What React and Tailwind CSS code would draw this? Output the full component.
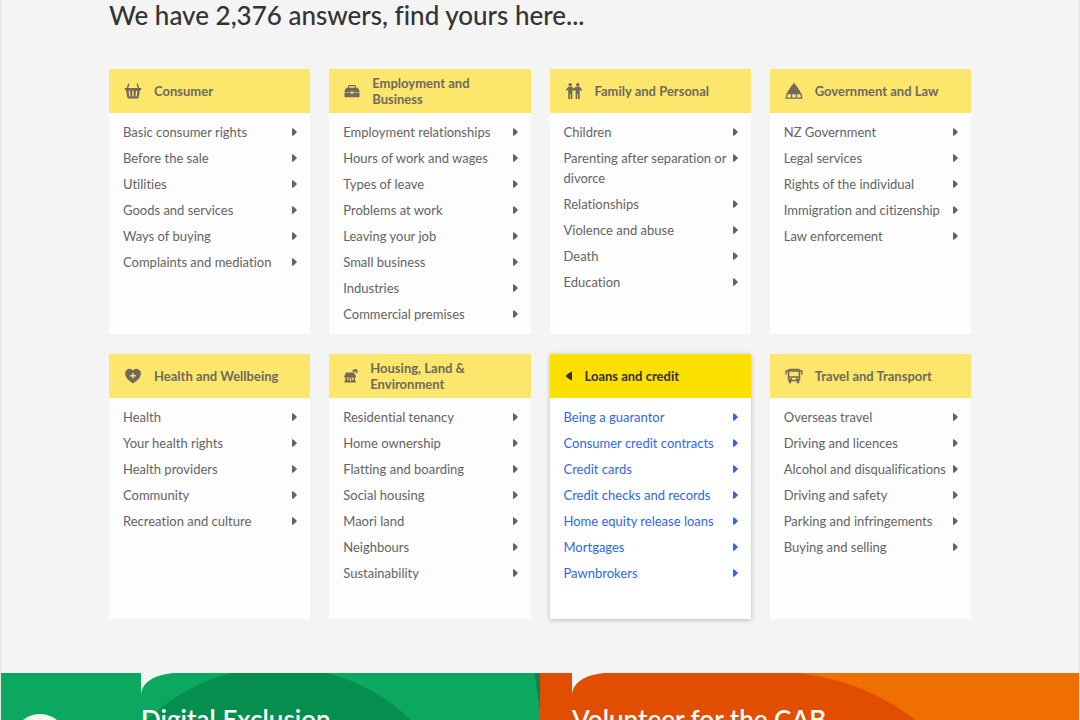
import React from "react";

const Basket = () => (
  <svg width="18" height="18" viewBox="0 0 18 18" fill="currentColor" fillRule="evenodd" aria-hidden="true">
    <path d="M4.200 1.600 5.500 2.100 4.200 6.200H2.700zM13.800 1.600 12.500 2.100 13.800 6.200H15.300z" />
    <path d="M.8 6h16.400v1.900H16L14.700 15.300q-.2 1.200-1.300 1.200H4.600q-1.100 0-1.300-1.200L2 7.900H.8zM4.600 8.800l.7 5.700h1.200L6 8.800zM8.300 8.800v5.700h1.400V8.800zM12 8.800l-.5 5.700h1.200l.7-5.700z" />
  </svg>
);

const Briefcase = () => (
  <svg width="16" height="18" viewBox="0 0 16 18" fill="currentColor" aria-hidden="true">
    <path d="M4.600 6.500V4.600q0-.9.900-.9h5q.9 0 .9.900v1.900" fill="none" stroke="currentColor" strokeWidth="1.200" />
    <path d="M2.200 5.800h11.600l1.700 3v1.600H9.200v-.8H6.800v.8H.5V8.800z" />
    <path d="M.5 11h6.300v.8h2.400V11h6.300v3.400q0 .8-.8.800H1.300q-.8 0-.8-.8z" />
  </svg>
);

const People = () => (
  <svg width="18" height="18" viewBox="0 0 18 18" fill="currentColor" aria-hidden="true">
    <circle cx="5.200" cy="2.700" r="1.700" />
    <circle cx="12.800" cy="2.700" r="1.700" />
    <path d="M3.200 4.800h4L9 6.600l1.800-1.800h4l2.400 3.100-.9 1.100-1.500-1.500V17h-1.700v-5h-.8v5h-1.700V7.900L9 9 7.400 7.900V17H5.700v-5h-.8v5H3.200V7.500L1.700 9 .8 7.900z" />
  </svg>
);

const Beehive = () => (
  <svg width="18" height="18" viewBox="0 0 18 18" fill="currentColor" aria-hidden="true">
    <path d="M8.400.8h1.200v1.400l1.900 1 .3 1.700 1.500.9.400 1.900 1.400 1 .5 2.600H2.400l.5-2.600 1.400-1 .4-1.900 1.500-.9.300-1.700 1.900-1z" />
    <path d="M2.200 11.600h13.600l1 4.600H1.200zM6.600 11.600v4.600M11.400 11.600v4.600" fill="none" stroke="currentColor" strokeWidth="1.300" />
  </svg>
);

const HeartPlus = () => (
  <svg width="18" height="18" viewBox="0 0 18 18" fill="currentColor" fillRule="evenodd" aria-hidden="true">
    <path d="M9 3.600C10.300 1.900 12 1.500 13.500 1.900 16 2.500 17.400 5 16.800 7.700 16 11 13 14 9 16.500 5 14 2 11 1.200 7.700.6 5 2 2.500 4.500 1.900 6 1.500 7.700 1.900 9 3.600zM8.300 6v2H6.200v1.400h2.100v2.100h1.400V9.400h2.100V8H9.700V6z" />
  </svg>
);

const House = () => (
  <svg width="14" height="18" viewBox="0 0 14 18" fill="currentColor" fillRule="evenodd" aria-hidden="true">
    <path d="M2 5.500h8L12 9.200v1.100h-1V14h.8v1.500H.4V14h.8v-3.700H.2V9.200zM3.200 10.600V13h1.400v-2.400zM5.900 10.600V14h1.200v-3.400zM8.200 10.600V13h1.400v-2.400z" />
    <path d="M8.700 4.900V3.400q.1-.8.900-.8h.8q.8-1 2.100-.4 1.300.7 1.200 2.300-.2 1.400-1.200 2-.9-.6-1.200-2.200h-.9v1z" />
  </svg>
);

const Bus = () => (
  <svg width="18" height="18" viewBox="0 0 18 18" fill="none" stroke="currentColor" aria-hidden="true">
    <rect x="3.500" y="2.500" width="11" height="11" rx="1.500" strokeWidth="1.600" />
    <path d="M3.500 4h11M3.500 10h11" strokeWidth="1.300" />
    <path d="M3.400 3.800H1.800q-.8 0-.8.800v3M14.600 3.800h1.600q.8 0 .8.800v3" strokeWidth="1.400" />
    <path d="M5 13.500v2.700M13 13.500v2.700" strokeWidth="2.400" />
    <path d="M4.500 12.200h2.500M11 12.200h2.500" strokeWidth="1.800" />
  </svg>
);

const Back = () => (
  <svg width="8" height="10" viewBox="0 0 8 10" fill="currentColor" aria-hidden="true">
    <path d="M7 .5v9q-3.200-1-6.500-4.500Q3.800 1.500 7 .5z" />
  </svg>
);

const Arrow = () => (
  <svg className="mt-[6px] shrink-0" width="5" height="8" viewBox="0 0 5 8" fill="currentColor" aria-hidden="true">
    <path d="M0 0q2.500.8 5 4-2.500 3.200-5 4z" />
  </svg>
);

const categories = [
  { title: "Consumer", Icon: Basket, items: ["Basic consumer rights", "Before the sale", "Utilities", "Goods and services", "Ways of buying", "Complaints and mediation"] },
  { title: "Employment and Business", Icon: Briefcase, items: ["Employment relationships", "Hours of work and wages", "Types of leave", "Problems at work", "Leaving your job", "Small business", "Industries", "Commercial premises"] },
  { title: "Family and Personal", Icon: People, items: ["Children", "Parenting after separation or divorce", "Relationships", "Violence and abuse", "Death", "Education"] },
  { title: "Government and Law", Icon: Beehive, items: ["NZ Government", "Legal services", "Rights of the individual", "Immigration and citizenship", "Law enforcement"] },
  { title: "Health and Wellbeing", Icon: HeartPlus, items: ["Health", "Your health rights", "Health providers", "Community", "Recreation and culture"] },
  { title: "Housing, Land & Environment", Icon: House, items: ["Residential tenancy", "Home ownership", "Flatting and boarding", "Social housing", "Maori land", "Neighbours", "Sustainability"] },
  { title: "Loans and credit", Icon: Back, active: true, items: ["Being a guarantor", "Consumer credit contracts", "Credit cards", "Credit checks and records", "Home equity release loans", "Mortgages", "Pawnbrokers"] },
  { title: "Travel and Transport", Icon: Bus, items: ["Overseas travel", "Driving and licences", "Alcohol and disqualifications", "Driving and safety", "Parking and infringements", "Buying and selling"] },
];

function Card({ title, Icon, items, active }) {
  return (
    <section className={active ? "bg-white text-[#2f66e8] shadow-[0_1px_5px_rgba(0,0,0,0.25)]" : "bg-[#fdfdfd] text-[#646464]"}>
      <button
        type="button"
        className={
          active
            ? "flex h-11 w-full items-center gap-3 bg-[#fce000] px-[15px] text-left text-[#333026]"
            : "flex h-11 w-full items-center gap-3 bg-[#fce66c] px-[15px] text-left text-[#6f6a5c]"
        }
      >
        <span className="shrink-0">
          <Icon />
        </span>
        <span className="text-[13px] leading-4 font-bold">{title}</span>
      </button>
      <ul className="flex min-h-[221px] flex-col gap-[6px] py-[9px] pr-[13px] pl-[14px]">
        {items.map((item) => (
          <li key={item}>
            <a href="#" className="flex items-start justify-between gap-1 text-[13px] leading-5">
              <span>{item}</span>
              <Arrow />
            </a>
          </li>
        ))}
      </ul>
    </section>
  );
}

const Corner = () => (
  <svg className="absolute top-0 left-0" width="32" height="22" viewBox="0 0 32 22" fill="#f4f4f4" aria-hidden="true">
    <path d="M0 0h32C13 2 1 9 0 22z" />
  </svg>
);

export default function App() {
  return (
    <div className="flex h-screen flex-col overflow-hidden border-x border-[#e6e6e6] bg-[#f4f4f4] font-['Lato',sans-serif] [font-variant-ligatures:none]">
      <main className="mx-auto w-full max-w-[862px] shrink-0 pb-[54px]">
        <h1 className="pb-[39px] text-[26px] leading-[30px] font-medium text-[#333]">We have 2,376 answers, find yours here...</h1>
        <div className="grid grid-cols-4 gap-x-[19px] gap-y-5">
          {categories.map((c) => (
            <Card key={c.title} {...c} />
          ))}
        </div>
      </main>
      <footer className="grid shrink-0 grid-cols-2 text-white">
        <article className="relative h-40 overflow-hidden bg-[#0ca860] pl-[140px]">
          <svg className="absolute inset-0 h-full w-full" aria-hidden="true">
            <circle cx="278" cy="185" r="191" fill="#058e4e" />
            <circle cx="39" cy="68" r="27" fill="#f4f4f4" />
            <path d="M533.500 0H540V45z" fill="#158048" />
          </svg>
          <div className="relative pt-[31px]">
            <Corner />
            <h2 className="text-[26px] leading-[30px] font-semibold">Digital Exclusion</h2>
          </div>
        </article>
        <article className="relative h-40 overflow-hidden bg-[#ef7000] pl-8">
          <svg className="absolute inset-0 h-full w-full" aria-hidden="true">
            <path d="M0 0H235V160H0z" fill="#e24e00" />
            <circle cx="235" cy="229" r="230" fill="#e24e00" />
          </svg>
          <div className="relative pt-[31px]">
            <Corner />
            <h2 className="text-[26px] leading-[30px] font-semibold">Volunteer for the CAB</h2>
          </div>
        </article>
      </footer>
    </div>
  );
}
